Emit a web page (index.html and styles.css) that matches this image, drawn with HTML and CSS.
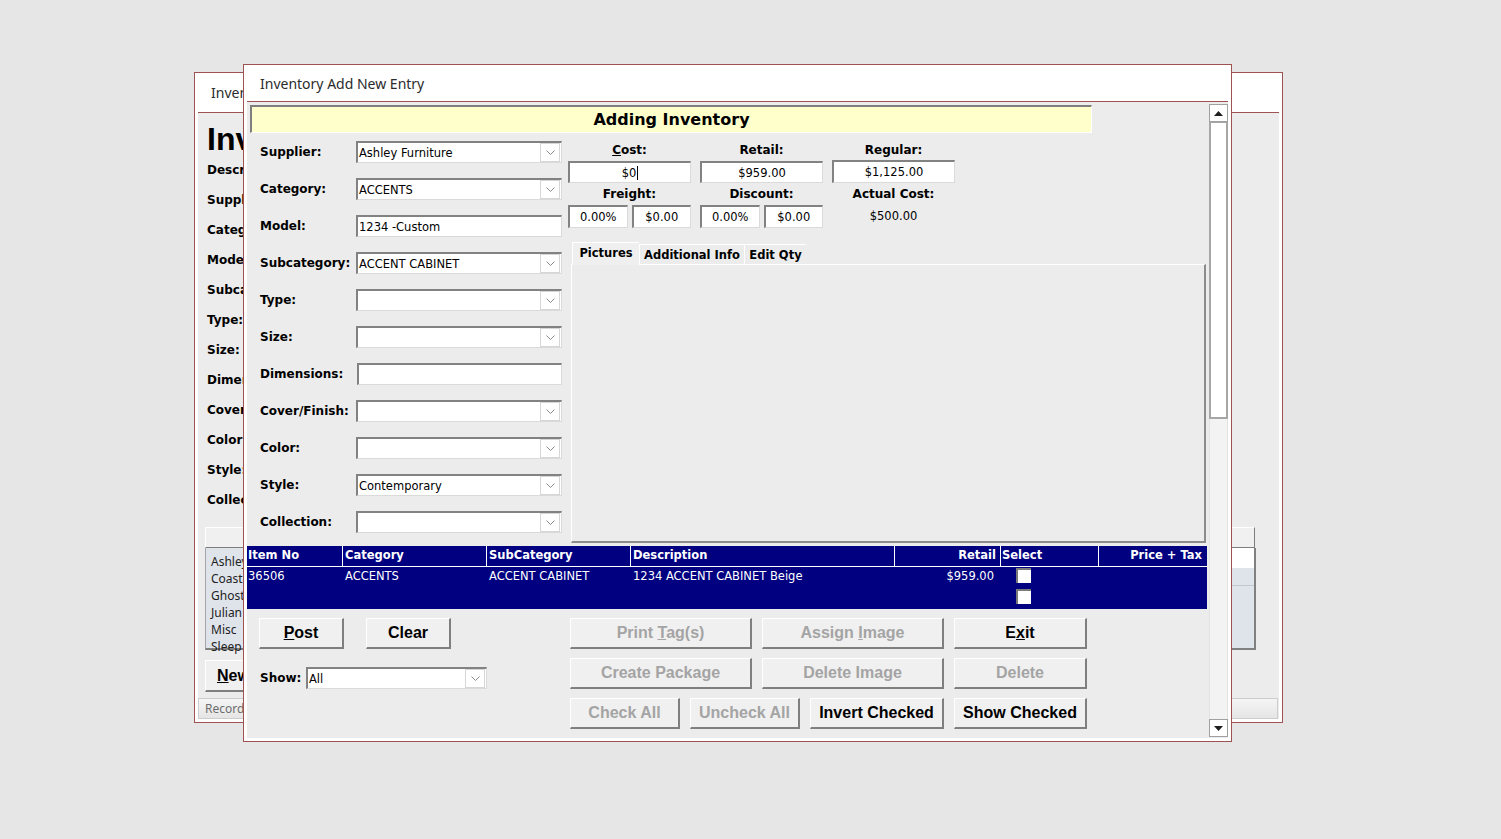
FILE: index.html
```html
<!DOCTYPE html>
<html lang="en">

<head>
    <meta charset="UTF-8">
    <meta name="viewport" content="width=device-width, initial-scale=1.0">
    <title>Inventory Add New Entry</title>

    <link rel="stylesheet" href="styles.css">
</head>

<body>
    <div class="desk">

        <!-- window behind, mostly covered -->
        <div class="win back">
            <div class="win-title">Inventory</div>
            <div class="back-body">
                <h1 class="back-head">Inventory</h1>
                <div class="back-labels">
                    <div>Description:</div>
                    <div>Supplier:</div>
                    <div>Category:</div>
                    <div>Model:</div>
                    <div>Subcategory:</div>
                    <div>Type:</div>
                    <div>Size:</div>
                    <div>Dimensions:</div>
                    <div>Cover/Finish:</div>
                    <div>Color:</div>
                    <div>Style:</div>
                    <div>Collection:</div>
                </div>
                <div class="back-grid-head"></div>
                <div class="back-list">
                    <div class="back-items">
                        <div>Ashley Furniture</div>
                        <div>Coaster</div>
                        <div>Ghost</div>
                        <div>Julian</div>
                        <div>Misc</div>
                        <div>Sleep</div>
                    </div>
                    <div class="back-side">
                        <div class="back-side-row"></div>
                        <div class="back-side-row2"></div>
                    </div>
                </div>
                <div class="btn back-new"><span><u>N</u>ew</span></div>
                <div class="back-status">Record</div>
            </div>
        </div>

        <!-- front window -->
        <div class="win front">
            <div class="win-title">Inventory Add New Entry</div>
            <div class="front-body">
                <div class="form">
                    <div class="banner">Adding Inventory</div>

                    <div class="main-row">
                        <div class="fields">
                            <label>Supplier:</label>
                            <div class="combo"><span>Ashley Furniture</span><i class="dd"><svg width="9" height="5" viewBox="0 0 9 5"><path d="M0.5 0.5 L4.5 4.5 L8.5 0.5" fill="none" stroke="#8a8a8a"/></svg></i></div>
                            <label>Category:</label>
                            <div class="combo"><span>ACCENTS</span><i class="dd"><svg width="9" height="5" viewBox="0 0 9 5"><path d="M0.5 0.5 L4.5 4.5 L8.5 0.5" fill="none" stroke="#8a8a8a"/></svg></i></div>
                            <label>Model:</label>
                            <div class="combo"><span>1234 -Custom</span></div>
                            <label>Subcategory:</label>
                            <div class="combo"><span>ACCENT CABINET</span><i class="dd"><svg width="9" height="5" viewBox="0 0 9 5"><path d="M0.5 0.5 L4.5 4.5 L8.5 0.5" fill="none" stroke="#8a8a8a"/></svg></i></div>
                            <label>Type:</label>
                            <div class="combo"><span></span><i class="dd"><svg width="9" height="5" viewBox="0 0 9 5"><path d="M0.5 0.5 L4.5 4.5 L8.5 0.5" fill="none" stroke="#8a8a8a"/></svg></i></div>
                            <label>Size:</label>
                            <div class="combo"><span></span><i class="dd"><svg width="9" height="5" viewBox="0 0 9 5"><path d="M0.5 0.5 L4.5 4.5 L8.5 0.5" fill="none" stroke="#8a8a8a"/></svg></i></div>
                            <label>Dimensions:</label>
                            <div class="combo text-only"><span></span></div>
                            <label>Cover/Finish:</label>
                            <div class="combo"><span></span><i class="dd"><svg width="9" height="5" viewBox="0 0 9 5"><path d="M0.5 0.5 L4.5 4.5 L8.5 0.5" fill="none" stroke="#8a8a8a"/></svg></i></div>
                            <label>Color:</label>
                            <div class="combo"><span></span><i class="dd"><svg width="9" height="5" viewBox="0 0 9 5"><path d="M0.5 0.5 L4.5 4.5 L8.5 0.5" fill="none" stroke="#8a8a8a"/></svg></i></div>
                            <label>Style:</label>
                            <div class="combo"><span>Contemporary</span><i class="dd"><svg width="9" height="5" viewBox="0 0 9 5"><path d="M0.5 0.5 L4.5 4.5 L8.5 0.5" fill="none" stroke="#8a8a8a"/></svg></i></div>
                            <label>Collection:</label>
                            <div class="combo"><span></span><i class="dd"><svg width="9" height="5" viewBox="0 0 9 5"><path d="M0.5 0.5 L4.5 4.5 L8.5 0.5" fill="none" stroke="#8a8a8a"/></svg></i></div>
                        </div>

                        <div class="right">
                            <div class="prices">
                                <div class="plabel"><u>C</u>ost:</div>
                                <div class="plabel">Retail:</div>
                                <div class="plabel">Regular:</div>
                                <div class="box">$0<span class="caret"></span></div>
                                <div class="box">$959.00</div>
                                <div class="box hi">$1,125.00</div>
                                <div class="plabel">Freight:</div>
                                <div class="plabel">Discount:</div>
                                <div class="plabel">Actual Cost:</div>
                                <div class="pair">
                                    <div class="box">0.00%</div>
                                    <div class="box">$0.00</div>
                                </div>
                                <div class="pair">
                                    <div class="box">0.00%</div>
                                    <div class="box">$0.00</div>
                                </div>
                                <div class="pvalue">$500.00</div>
                            </div>

                            <div class="tabs">
                                <div class="tab on">Pictures</div>
                                <div class="tab">Additional Info</div>
                                <div class="tab">Edit Qty</div>
                            </div>
                            <div class="tab-panel"></div>
                        </div>
                    </div>

                    <div class="grid">
                        <div class="grid-head">
                            <div>Item No</div>
                            <div>Category</div>
                            <div>SubCategory</div>
                            <div>Description</div>
                            <div class="num">Retail</div>
                            <div>Select</div>
                            <div class="num">Price + Tax</div>
                        </div>
                        <div class="grid-row">
                            <div>36506</div>
                            <div>ACCENTS</div>
                            <div>ACCENT CABINET</div>
                            <div>1234 ACCENT CABINET Beige</div>
                            <div class="num">$959.00</div>
                            <div><span class="check"></span></div>
                            <div></div>
                        </div>
                        <div class="grid-row">
                            <div></div>
                            <div></div>
                            <div></div>
                            <div></div>
                            <div></div>
                            <div><span class="check"></span></div>
                            <div></div>
                        </div>
                    </div>

                    <div class="bottom">
                        <div class="bottom-left">
                            <div class="btn-row">
                                <div class="btn w85"><span><u>P</u>ost</span></div>
                                <div class="btn w85 clear"><span>Clear</span></div>
                            </div>
                            <div class="show-row">
                                <label>Show:</label>
                                <div class="combo show"><span>All</span><i class="dd"><svg width="9" height="5" viewBox="0 0 9 5"><path d="M0.5 0.5 L4.5 4.5 L8.5 0.5" fill="none" stroke="#8a8a8a"/></svg></i></div>
                            </div>
                        </div>
                        <div class="bottom-right">
                            <div class="btn-row">
                                <div class="btn w182 off"><span>Print <u>T</u>ag(s)</span></div>
                                <div class="btn w182 off"><span>Assign <u>I</u>mage</span></div>
                                <div class="btn w133"><span>E<u>x</u>it</span></div>
                            </div>
                            <div class="btn-row">
                                <div class="btn w182 off"><span>Create Packa<u>g</u>e</span></div>
                                <div class="btn w182 off"><span>Delete Image</span></div>
                                <div class="btn w133 off"><span>Delete</span></div>
                            </div>
                            <div class="btn-row">
                                <div class="btn w110 off"><span>Check All</span></div>
                                <div class="btn w110 off"><span>Uncheck All</span></div>
                                <div class="btn w134"><span>Invert Checked</span></div>
                                <div class="btn w133"><span>Show Checked</span></div>
                            </div>
                        </div>
                    </div>
                </div>

                <div class="vscroll">
                    <div class="sb-btn"><svg width="9" height="5" viewBox="0 0 9 5"><path d="M0 5 L4.5 0 L9 5 Z" fill="#1e1e1e"/></svg></div>
                    <div class="sb-thumb"></div>
                    <div class="sb-track"></div>
                    <div class="sb-btn"><svg width="9" height="5" viewBox="0 0 9 5"><path d="M0 0 L4.5 5 L9 0 Z" fill="#1e1e1e"/></svg></div>
                </div>
            </div>
        </div>

    </div>
</body>

</html>
```

FILE: styles.css
```css
* {
    box-sizing: border-box;
}

body {
    margin: 0;
    background: #e6e6e6;
    font-family: "DejaVu Sans", Verdana, sans-serif;
    font-size: 11.5px;
    color: #000;
}

.desk {
    position: relative;
    width: 1501px;
    height: 839px;
    overflow: hidden;
}

/* windows */
.win {
    position: absolute;
    display: flex;
    flex-direction: column;
    background: #fff;
    border: 1px solid #9e5252;
    padding: 0 3px 3px;
}

.win-title {
    flex: none;
    border-bottom: 1px solid #9e5252;
    font-family: "Noto Sans", "Open Sans", sans-serif;
    font-size: 14px;
    color: #2b2b2b;
    padding-left: 13px;
    white-space: nowrap;
}

.back {
    left: 194px;
    top: 72px;
    width: 1089px;
    height: 651px;
}

.back .win-title {
    height: 40px;
    line-height: 39px;
}

.front {
    left: 243px;
    top: 64px;
    width: 989px;
    height: 678px;
}

.front .win-title {
    height: 37px;
    line-height: 38px;
}

/* back window content */
.back-body {
    flex: 1;
    display: flex;
    flex-direction: column;
    background: #ececec;
    overflow: hidden;
}

.back-head {
    margin: 11px 0 0 9px;
    font-family: "Liberation Sans", Arial, sans-serif;
    font-size: 32px;
    line-height: 31px;
    font-weight: bold;
}

.back-labels {
    margin-left: 9px;
    font-weight: bold;
    font-size: 12px;
}

.back-labels div {
    height: 30px;
    line-height: 30px;
}

.back-grid-head {
    margin: 12px 0 0 7px;
    width: 1050px;
    height: 21px;
    background: #f0f0f0;
    border-top: 1px solid #fff;
    border-left: 1px solid #fff;
    border-right: 1px solid #7d7d7d;
    border-bottom: 1px solid #7d7d7d;
}

.back-list {
    display: flex;
    margin-left: 7px;
    width: 1051px;
    height: 102px;
    border-left: 1px solid #a5a5a5;
    border-right: 2px solid #808080;
    border-bottom: 2px solid #808080;
    background: #dfe4eb;
}

.back-items {
    width: 900px;
    padding: 5px 0 0 5px;
    font-family: "Noto Sans", sans-serif;
    font-size: 12px;
    color: #222;
}

.back-items div {
    height: 17px;
    line-height: 17px;
}

.back-side {
    flex: 1;
}

.back-side-row {
    height: 20px;
    background: #fff;
}

.back-side-row2 {
    height: 18px;
    border-bottom: 1px solid #c4c9d0;
}

.btn.back-new {
    margin: 10px 0 0 7px;
    width: 95px;
    height: 32px;
    justify-content: flex-start;
    padding-left: 11px;
}

.back-status {
    margin-top: auto;
    margin-right: 1px;
    height: 21px;
    line-height: 19px;
    padding-left: 6px;
    border: 1px solid #cdcdcd;
    background: linear-gradient(#f5f5f5, #e5e5e5);
    font-family: "Noto Sans", sans-serif;
    font-size: 12px;
    color: #6d6d6d;
}

/* front window content */
.front-body {
    flex: 1;
    display: flex;
    background: #ececec;
    overflow: hidden;
}

.form {
    flex: 1;
    padding-top: 3px;
}

.banner {
    margin-left: 3px;
    width: 842px;
    height: 28px;
    background: #ffffcc;
    border-top: 2px solid #7f7f7f;
    border-left: 2px solid #7f7f7f;
    border-bottom: 1px solid #fff;
    border-right: 1px solid #fff;
    text-align: center;
    font-weight: bold;
    font-size: 16px;
    line-height: 25px;
}

.main-row {
    display: flex;
    margin-top: 8px;
}

.fields {
    display: grid;
    grid-template-columns: 96px 206px;
    grid-auto-rows: 22px;
    row-gap: 15px;
    padding-left: 13px;
    align-items: center;
}

label {
    font-weight: bold;
    font-size: 12px;
    white-space: nowrap;
}

.combo {
    display: flex;
    align-items: center;
    height: 22px;
    background: #fff;
    border-top: 2px solid #828282;
    border-left: 2px solid #828282;
    border-right: 1px solid #dadada;
    border-bottom: 1px solid #dadada;
}

.combo span {
    flex: 1;
    padding-left: 1px;
    white-space: nowrap;
}

.combo.text-only {
    margin-left: 1px;
}

.dd {
    display: flex;
    align-items: center;
    justify-content: center;
    width: 20px;
    height: 19px;
    margin-right: 1px;
    border: 1px solid #d6d6d6;
    background: #fff;
}

/* prices */
.right {
    margin-left: 6px;
    width: 638px;
}

.prices {
    display: grid;
    grid-template-columns: 123px 123px 123px;
    grid-template-rows: 18px 22px 18px 23px;
    column-gap: 9px;
    row-gap: 2px;
}

.plabel {
    text-align: center;
    font-weight: bold;
    font-size: 12px;
    line-height: 18px;
}

.box {
    display: flex;
    align-items: center;
    justify-content: center;
    background: #fff;
    border-top: 2px solid #828282;
    border-left: 2px solid #828282;
    border-right: 1px solid #dadada;
    border-bottom: 1px solid #dadada;
}

.box.hi {
    margin-top: -1px;
}

.caret {
    display: inline-block;
    width: 1px;
    height: 14px;
    background: #000;
    margin-left: 1px;
}

.pair {
    display: flex;
    gap: 4px;
}

.pair .box {
    width: 60px;
}

.pvalue {
    text-align: center;
    line-height: 23px;
}

/* tabs */
.tabs {
    display: flex;
    align-items: flex-end;
    height: 23px;
    margin: 14px 0 0 4px;
}

.tab {
    height: 21px;
    line-height: 20px;
    border-top: 1px solid #fff;
    border-left: 1px solid #fff;
    font-weight: bold;
    font-size: 11.5px;
    text-align: center;
    white-space: nowrap;
}

.tab.on {
    width: 67px;
    height: 23px;
    line-height: 20px;
    background: #efefef;
}

.tab:nth-child(2) {
    width: 105px;
}

.tab:nth-child(3) {
    width: 62px;
}

.tab-panel {
    margin: -1px 0 0 3px;
    width: 635px;
    height: 279px;
    border-top: 1px solid #fff;
    border-left: 1px solid #fff;
    border-right: 2px solid #8c8c8c;
    border-bottom: 2px solid #8c8c8c;
}

/* grid */
.grid {
    margin-top: 3px;
    width: 960px;
    background: #000080;
    color: #fff;
}

.grid-head,
.grid-row {
    display: grid;
    grid-template-columns: 96px 144px 144px 264px 106px 98px 108px;
}

.grid-head {
    height: 21px;
    border-bottom: 1px solid #fff;
    font-weight: bold;
    font-size: 11.5px;
    line-height: 19px;
}

.grid-head div {
    border-right: 1px solid #fff;
    padding: 0 4px 0 1px;
    white-space: nowrap;
}

.grid-head div:nth-child(2),
.grid-head div:nth-child(3),
.grid-head div:nth-child(4),
.grid-row div:nth-child(2),
.grid-row div:nth-child(3),
.grid-row div:nth-child(4) {
    padding-left: 2px;
}

.grid-head div:last-child {
    border-right: none;
    padding-right: 5px;
}

.grid-row {
    height: 21px;
    line-height: 18px;
}

.grid-row div {
    padding-left: 1px;
    white-space: nowrap;
}

.grid-row .num {
    padding-right: 7px;
}

.num {
    text-align: right;
}

.check {
    display: block;
    margin: 1px 0 0 14px;
    width: 15px;
    height: 15px;
    background: #fff;
    border-top: 2px solid #7a7a7a;
    border-left: 2px solid #7a7a7a;
}

/* buttons */
.bottom {
    display: flex;
    margin-top: 9px;
}

.bottom-left {
    width: 323px;
    padding-left: 12px;
}

.bottom-right {
    display: flex;
    flex-direction: column;
    gap: 9px;
}

.btn-row {
    display: flex;
    gap: 10px;
}

.btn {
    display: flex;
    align-items: center;
    justify-content: center;
    height: 31px;
    background: #f0f0f0;
    border-top: 1px solid #fff;
    border-left: 1px solid #fff;
    border-right: 2px solid #7f7f7f;
    border-bottom: 2px solid #7f7f7f;
    font-family: "Liberation Sans", Arial, sans-serif;
    font-weight: bold;
    font-size: 16px;
    white-space: nowrap;
}

.btn.off {
    color: #a4a4a4;
}

.btn.clear {
    margin-left: 12px;
}

.w85 { width: 85px; }
.w110 { width: 110px; }
.w133 { width: 133px; }
.w134 { width: 134px; }
.w182 { width: 182px; }

.show-row {
    display: flex;
    align-items: center;
    margin-top: 18px;
    padding-left: 1px;
}

.show-row label {
    width: 46px;
}

.combo.show {
    width: 181px;
}

/* scrollbar */
.vscroll {
    display: flex;
    flex-direction: column;
    width: 19px;
    margin: 2px 0 1px;
}

.sb-btn {
    display: flex;
    align-items: center;
    justify-content: center;
    height: 18px;
    background: #fff;
    border: 1px solid #a0a0a0;
}

.sb-thumb {
    height: 297px;
    background: #fff;
    border: 2px solid #a6a6a6;
    border-top-width: 1px;
}

.sb-track {
    flex: 1;
    background: #f3f3f3;
    border-left: 1px solid #e2e2e2;
    border-right: 1px solid #e2e2e2;
}
```
